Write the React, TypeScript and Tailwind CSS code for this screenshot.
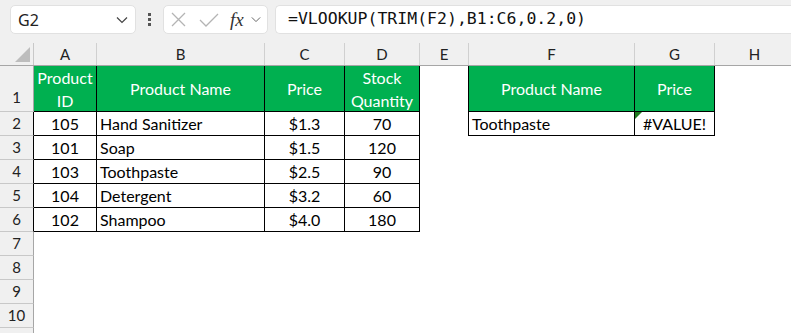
import React from "react";

const cols = ["A", "B", "C", "D", "E", "F", "G", "H"];
const colW = [63, 168, 80, 75, 49, 166, 80, 80];

const data = [
  ["105", "Hand Sanitizer", "$1.3", "70"],
  ["101", "Soap", "$1.5", "120"],
  ["103", "Toothpaste", "$2.5", "90"],
  ["104", "Detergent", "$3.2", "60"],
  ["102", "Shampoo", "$4.0", "180"],
];

const cellFont = { fontFamily: "Lato, 'Open Sans', sans-serif" };

function Chevron({ className }: { className?: string }) {
  return (
    <svg className={className} viewBox="0 0 12 8" fill="none" stroke="currentColor" strokeWidth="1.2">
      <path d="M1 1.5 L6 6.5 L11 1.5" />
    </svg>
  );
}

export default function App() {
  return (
    <div className="w-[791px] h-[333px] overflow-hidden bg-white" style={{ fontFamily: "Lato, sans-serif" }}>
      {/* formula bar */}
      <div className="h-[43px] bg-[#f0f0f0] flex items-start pt-[5px] pl-[10px] gap-0">
        <div className="w-[126px] h-[29px] bg-white border border-[#e1e1e1] rounded-[5px] flex items-center justify-between pl-[7px] pr-[7px]">
          <span className="text-[16px] text-[#222]" style={{ fontFamily: "'Noto Sans', sans-serif" }}>G2</span>
          <Chevron className="w-[12px] h-[8px] text-[#444]" />
        </div>
        <div className="w-[27px] h-[29px] flex flex-col items-center justify-center gap-[2px]">
          <div className="w-[3px] h-[3px] bg-[#555]" />
          <div className="w-[3px] h-[3px] bg-[#555]" />
          <div className="w-[3px] h-[3px] bg-[#555]" />
        </div>
        <div className="w-[105px] h-[29px] bg-white border border-[#e1e1e1] rounded-[5px] flex items-center pl-[7px]">
          <svg className="w-[15px] h-[15px]" viewBox="0 0 15 15" stroke="#b4b4b4" strokeWidth="1.3" fill="none">
            <path d="M1 1 L14 14 M14 1 L1 14" />
          </svg>
          <svg className="w-[20px] h-[14px] ml-[13px]" viewBox="0 0 20 14" stroke="#b4b4b4" strokeWidth="1.3" fill="none">
            <path d="M1 7 L7 13 L19 1" />
          </svg>
          <span
            className="ml-[11px] text-[19px] italic text-[#333] leading-none"
            style={{ fontFamily: "'Liberation Serif', serif" }}
          >
            fx
          </span>
          <Chevron className="w-[10px] h-[7px] ml-[7px] text-[#666]" />
        </div>
        <div className="flex-1 ml-[7px] h-[29px] bg-white border border-[#e1e1e1] border-r-0 rounded-l-[5px] flex items-center pl-[12px]">
          <span className="text-[16.5px] text-[#111]" style={{ fontFamily: "'DejaVu Sans Mono', monospace" }}>
            =VLOOKUP(TRIM(F2),B1:C6,0.2,0)
          </span>
        </div>
      </div>

      {/* column header */}
      <div className="flex h-[23px] bg-[#f0f0f0] border-b border-[#a6a6a6]">
        <div className="w-[34px] shrink-0 relative border-r border-[#c8c8c8]">
          <svg className="absolute left-[15px] top-[4px] w-[15px] h-[15px]" viewBox="0 0 15 15">
            <path d="M15 0 L15 15 L0 15 Z" fill="#bdbdbd" />
          </svg>
        </div>
        {cols.map((c, i) => (
          <div
            key={c}
            style={{ width: colW[i] }}
            className="shrink-0 flex items-center justify-center border-r border-[#d0d0d0] text-[15px] text-[#222]"
          >
            {c}
          </div>
        ))}
      </div>

      {/* row 1 */}
      <div className="flex h-[46px]" style={cellFont}>
        <div className="w-[34px] shrink-0 bg-[#f0f0f0] border-r border-[#a6a6a6] border-b border-b-[#c8c8c8] flex items-end justify-center pb-[3px] text-[15px] text-[#222]">
          1
        </div>
        <Head w={63} two>
          <span>Product</span>
          <span>ID</span>
        </Head>
        <Head w={168}>Product Name</Head>
        <Head w={80}>Price</Head>
        <Head w={75} two>
          <span>Stock</span>
          <span>Quantity</span>
        </Head>
        <div className="w-[49px] shrink-0 border-r border-black" />
        <Head w={166}>Product Name</Head>
        <Head w={80}>Price</Head>
      </div>

      {/* rows 2-11 */}
      {Array.from({ length: 10 }).map((_, r) => {
        const rowNum = r + 2;
        const d = data[r];
        const inTable = !!d;
        return (
          <div key={rowNum} className="flex h-[24px]" style={cellFont}>
            <div
              className={
                "w-[34px] shrink-0 bg-[#f0f0f0] border-r border-b border-b-[#c8c8c8] flex items-center justify-center text-[15px] text-[#222] " +
                (inTable ? "border-r-black" : "border-r-[#a6a6a6]")
              }
            >
              {rowNum <= 10 ? rowNum : ""}
            </div>
            {inTable ? (
              <>
                <div className="w-[63px] shrink-0 border-r border-b border-black flex items-center justify-center text-[16px] text-black">
                  {d[0]}
                </div>
                <div className="w-[168px] shrink-0 border-r border-b border-black flex items-center pl-[3px] text-[16px] text-black">
                  {d[1]}
                </div>
                <div className="w-[80px] shrink-0 border-r border-b border-black flex items-center justify-center text-[16px] text-black">
                  {d[2]}
                </div>
                <div className="w-[75px] shrink-0 border-r border-b border-black flex items-center justify-center text-[16px] text-black">
                  {d[3]}
                </div>
              </>
            ) : null}
            {rowNum === 2 ? (
              <>
                <div className="w-[49px] shrink-0 border-r border-black" />
                <div className="w-[166px] shrink-0 border-r border-b border-black flex items-center pl-[3px] text-[16px] text-black">
                  Toothpaste
                </div>
                <div className="w-[80px] shrink-0 border-r border-b border-black flex items-center justify-center text-[16px] text-black relative">
                  <svg className="absolute left-0 top-0 w-[7px] h-[7px]" viewBox="0 0 7 7">
                    <path d="M0 0 L7 0 L0 7 Z" fill="#1f7a1f" />
                  </svg>
                  #VALUE!
                </div>
              </>
            ) : null}
          </div>
        );
      })}
    </div>
  );
}

function Head({ w, two, children }: { w: number; two?: boolean; children: React.ReactNode }) {
  return (
    <div
      style={{ width: w }}
      className={
        "shrink-0 bg-[#00b050] border-r border-b border-black flex items-center justify-center text-center text-[16px] text-white " +
        (two ? "flex-col leading-[23px]" : "")
      }
    >
      {children}
    </div>
  );
}
